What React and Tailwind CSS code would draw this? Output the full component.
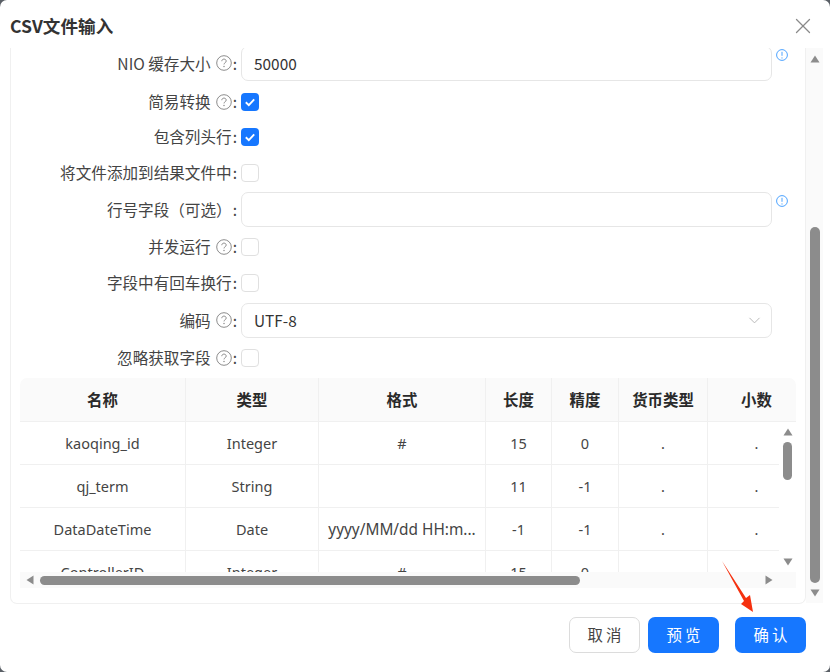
import { X, ChevronDown } from 'lucide-react'

const font = "font-['Noto_Sans_CJK_SC','Noto_Sans',sans-serif]"
const tableFont = "font-['Noto_Sans','Noto_Sans_CJK_SC',sans-serif]"
const COLS = 'grid grid-cols-[166px_133px_167px_66px_67px_89px_98px] w-[786px] border-b border-[#f0f0f0]'

const HEAD = ['名称', '类型', '格式', '长度', '精度', '货币类型', '小数']
const ROWS = [
  ['kaoqing_id', 'Integer', '#', '15', '0', '.', '.'],
  ['qj_term', 'String', '', '11', '-1', '.', '.'],
  ['DataDateTime', 'Date', 'yyyy/MM/dd HH:m...', '-1', '-1', '.', '.'],
  ['ControllerID', 'Integer', '#', '15', '0', '.', '.'],
]

function Help() {
  return (
    <svg viewBox="0 0 16 16" className="w-[16px] h-[16px] ml-[5px] shrink-0" fill="none">
      <circle cx="8" cy="8" r="7.3" stroke="#8c8c8c" strokeWidth="1" />
      <path d="M5.8 6.2C5.8 4.9 6.8 4.1 8 4.1s2.2.8 2.2 2c0 1.6-2.2 1.7-2.2 3.3" stroke="#8c8c8c" strokeWidth="1" />
      <circle cx="8" cy="11.6" r=".75" fill="#8c8c8c" />
    </svg>
  )
}

function Info() {
  return (
    <svg viewBox="0 0 12 12" className="w-[12px] h-[12px] ml-[4px] mt-[3px] shrink-0" fill="none">
      <circle cx="6" cy="6" r="5.4" stroke="#4da3ff" strokeWidth="1" />
      <path d="M6 2.8v4" stroke="#4da3ff" strokeWidth="1" />
      <circle cx="6" cy="8.9" r=".6" fill="#4da3ff" />
    </svg>
  )
}

function Check({ on }) {
  if (!on) return <div className="w-[18px] h-[18px] rounded-[4px] border border-[#e0e0e0] bg-white" />
  return (
    <div className="w-[18px] h-[18px] rounded-[4px] bg-[#1677ff] flex items-center justify-center">
      <svg viewBox="0 0 12 12" className="w-[12px] h-[12px]" fill="none">
        <path d="M1.8 6.2l3 2.9 5.4-5.8" stroke="#fff" strokeWidth="1.9" />
      </svg>
    </div>
  )
}

function Label({ text, help }) {
  return (
    <div className="w-[230px] shrink-0 flex items-center justify-end text-[15.6px] text-[#444]">
      <span className="whitespace-nowrap">{text}</span>
      {help && <Help />}
      <span className="ml-[1px] mr-[4px]">:</span>
    </div>
  )
}

function Row({ text, help, className, children }) {
  return (
    <div className={`flex items-center ${className}`}>
      <Label text={text} help={help} />
      <div className="flex items-start">{children}</div>
    </div>
  )
}

function Box({ value, tip }) {
  return (
    <>
      <div className="w-[531px] h-[35px] rounded-[7px] border border-[#e6e6e6] bg-white flex items-center px-[12px] text-[15.4px] text-[#333]">
        {value}
      </div>
      {tip && <Info />}
    </>
  )
}

function Tri({ dir, className }) {
  const d = { up: 'M5 1.5l4.5 7h-9z', down: 'M.5 1.5h9l-4.5 7z', left: 'M8.5 .5v9L1.5 5z', right: 'M1.5 .5l7 4.5-7 4.5z' }[dir]
  return (
    <svg viewBox="0 0 10 10" className={`w-[10px] h-[10px] ${className}`} fill="#8c8c8c">
      <path d={d} />
    </svg>
  )
}

function Btn({ children, primary, className }) {
  return (
    <button
      className={`w-[71px] h-[36px] rounded-[7px] text-[15.4px] tracking-[3px] pl-[3px] ${
        primary ? 'bg-[#1677ff] text-white' : 'bg-white border border-[#dcdcdc] text-[#444]'
      } ${className || ''}`}
    >
      {children}
    </button>
  )
}

export default function App() {
  return (
    <div className={`relative w-[830px] h-[672px] bg-[#5a5f66] overflow-hidden ${font}`}>
      <div className="w-full h-full bg-white rounded-[7px] flex flex-col">
        {/* header */}
        <div className="h-[48px] shrink-0 flex items-center justify-between pl-[10px] pr-[14px] pt-[4px]">
          <span className="text-[17.6px] font-semibold text-[#333]">CSV文件输入</span>
          <X className="w-[26px] h-[26px] text-[#8a8a8a]" strokeWidth={1.2} />
        </div>

        {/* body */}
        <div className="relative ml-[10px] w-[796px] h-[556px] shrink-0 border-l border-b border-r border-[#f0f0f0] rounded-b-[7px]">
          <div className="h-full overflow-hidden">
            <div className="-mt-[2px]">
              <Row text="NIO 缓存大小" help className="h-[35px]"><Box value="50000" tip /></Row>
              <Row text="简易转换" help className="h-[18px] mt-[12px]"><Check on /></Row>
              <Row text="包含列头行" className="h-[18px] mt-[17px]"><Check on /></Row>
              <Row text="将文件添加到结果文件中" className="h-[18px] mt-[18px]"><Check /></Row>
              <Row text="行号字段（可选）" className="h-[35px] mt-[10px]"><Box tip /></Row>
              <Row text="并发运行" help className="h-[18px] mt-[11px]"><Check /></Row>
              <Row text="字段中有回车换行" className="h-[18px] mt-[18px]"><Check /></Row>
              <Row text="编码" help className="h-[35px] mt-[11px]">
                <div className="relative">
                  <Box value="UTF-8" />
                  <ChevronDown className="absolute right-[8px] top-[8px] w-[19px] h-[19px] text-[#b5b5b5]" strokeWidth={1.2} />
                </div>
              </Row>
              <Row text="忽略获取字段" help className="h-[18px] mt-[11px]"><Check /></Row>

              {/* table */}
              <div className={`relative mt-[11px] ml-[9px] w-[776px] h-[210px] rounded-t-[7px] overflow-hidden text-[14.5px] text-[#444] ${tableFont}`}>
                <div className={`${COLS} h-[44px] bg-[#fafafa] font-semibold text-[15.4px] text-[#2a2a2a]`}>
                  {HEAD.map(h => (
                    <div key={h} className={`flex items-center justify-center border-r border-[#f0f0f0] ${font}`}>{h}</div>
                  ))}
                </div>
                {ROWS.map(r => (
                  <div key={r[0]} className={`${COLS} h-[43px]`}>
                    {r.map((c, i) => (
                      <div
                        key={i}
                        className={`flex items-center justify-center pt-[2px] border-r border-[#f0f0f0] whitespace-nowrap overflow-hidden ${c.length > 12 ? 'text-[15.4px]' : ''}`}
                      >
                        {c}
                      </div>
                    ))}
                  </div>
                ))}

                {/* table scrollbars */}
                <div className="absolute right-0 top-[44px] w-[17px] h-[150px] bg-white flex flex-col items-center">
                  <Tri dir="up" className="mt-[5px]" />
                  <div className="w-[9px] h-[38px] mt-[5px] rounded-full bg-[#8c8c8c]" />
                  <Tri dir="down" className="mt-[77px]" />
                </div>
                <div className="absolute left-0 bottom-0 w-full h-[16px] bg-[#fafafa] flex items-center">
                  <Tri dir="left" className="ml-[5px]" />
                  <div className="w-[540px] h-[9px] ml-[5px] rounded-full bg-[#8c8c8c]" />
                  <Tri dir="right" className="ml-[184px]" />
                </div>
              </div>
            </div>
          </div>
        </div>

        {/* footer */}
        <div className="flex justify-end gap-[8px] pr-[24px] mt-[13px]">
          <Btn>取消</Btn>
          <Btn primary>预览</Btn>
          <Btn primary className="ml-[8px]">确认</Btn>
        </div>
      </div>

      {/* outer scrollbar */}
      <div className="absolute left-[806px] top-[48px] w-[17px] h-[555px] bg-[#fafafa] flex flex-col items-center">
        <Tri dir="up" className="mt-[6px]" />
        <div className="w-[10px] h-[356px] mt-[163px] rounded-full bg-[#8c8c8c]" />
        <Tri dir="down" className="mt-[5px]" />
      </div>

      {/* red arrow annotation */}
      <svg viewBox="0 0 830 672" className="absolute inset-0 w-[830px] h-[672px] pointer-events-none">
        <path d="M722 561L746 598L750 595L753 612L741 604L744 601Z" fill="#f5310f" />
      </svg>
    </div>
  )
}
